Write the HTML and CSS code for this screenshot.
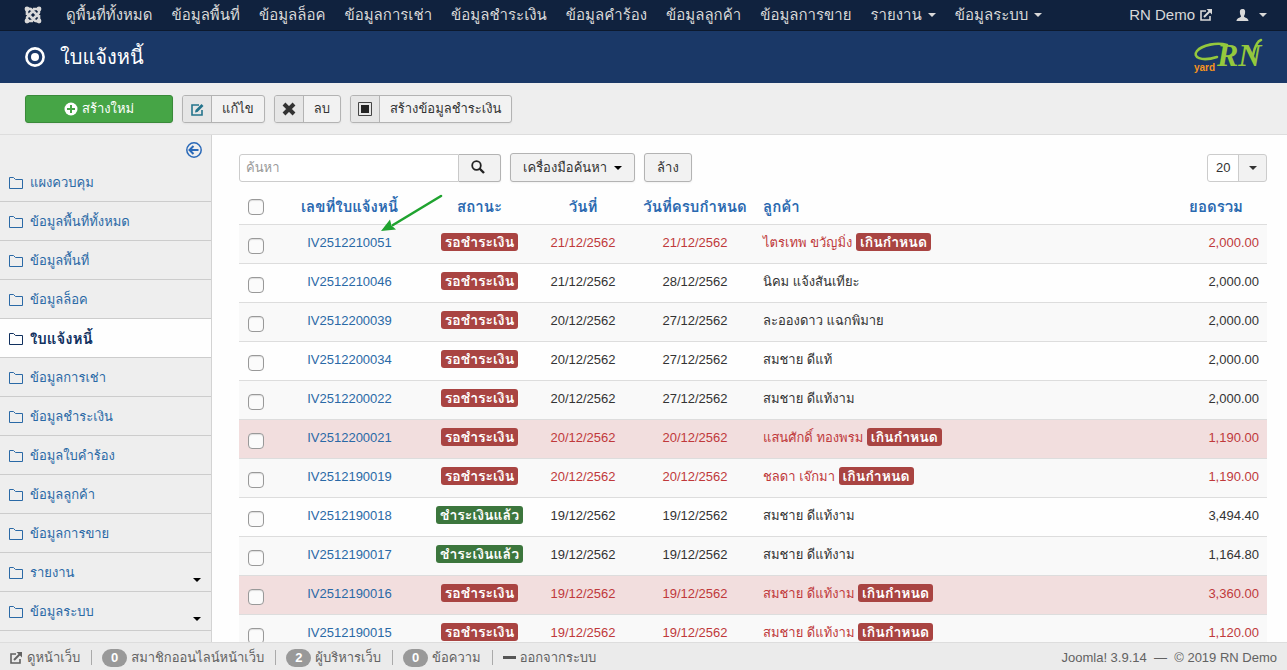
FILE: index.html
```html
<!DOCTYPE html>
<html lang="th">
<head>
<meta charset="utf-8">
<meta name="viewport" content="width=device-width, initial-scale=1">
<title>ใบแจ้งหนี้ - RN Demo</title>
<link rel="stylesheet" href="styles.css">
</head>
<body>
<svg class="defs" aria-hidden="true">
  <symbol id="folder" viewBox="0 0 14 12"><path d="M.5 .5V11.500H13.500V2.500H6.500L4.500.500Z" fill="none" stroke="currentColor"/></symbol>
  <symbol id="out" viewBox="0 0 12 12"><path d="M6 2H1V11H10V7" fill="none" stroke="currentColor" stroke-width="1.600"/><path d="M4 8L10 2" stroke="currentColor" stroke-width="2"/><path d="M6.500 0H12V5.500Z" fill="currentColor"/></symbol>
</svg>
<nav class="navbar">
  <a class="joomla" href="#" aria-label="Joomla"><svg width="18" height="18" viewBox="0 0 18 18"><g fill="none" stroke="currentColor" stroke-width="2.600"><path d="M3 9V5C3 3 6 2 8 4L14 10M9 3H13C15 3 16 6 14 8L8 14M15 9V13C15 15 12 16 10 14L4 8M9 15H5C3 15 2 12 4 10L10 4"/></g><g fill="currentColor"><circle cx="3" cy="3" r="2.400"/><circle cx="15" cy="3" r="2.400"/><circle cx="3" cy="15" r="2.400"/><circle cx="15" cy="15" r="2.400"/></g></svg></a>
  <a href="#">ดูพื้นที่ทั้งหมด</a>
  <a href="#">ข้อมูลพื้นที่</a>
  <a href="#">ข้อมูลล็อค</a>
  <a href="#">ข้อมูลการเช่า</a>
  <a href="#">ข้อมูลชำระเงิน</a>
  <a href="#">ข้อมูลคำร้อง</a>
  <a href="#">ข้อมูลลูกค้า</a>
  <a href="#">ข้อมูลการขาย</a>
  <a href="#">รายงาน<span class="caret"></span></a>
  <a href="#">ข้อมูลระบบ<span class="caret"></span></a>
  <a class="site" href="#">RN Demo <svg width="12" height="12"><use href="#out"/></svg></a>
  <a class="user" href="#" aria-label="ผู้ใช้"><svg width="13" height="12" viewBox="0 0 13 12"><path d="M6.500 0C9 0 9.500 2 9 4.500C8.800 6 8 6.500 8 7.500C8.500 8.800 12.500 9 12.500 12H.500C.500 9 4.500 8.800 5 7.500C5 6.500 4.200 6 4 4.500C3.500 2 4 0 6.500 0Z" fill="currentColor"/></svg><span class="caret"></span></a>
</nav>
<header class="header">
  <svg width="20" height="20" viewBox="0 0 20 20"><circle cx="10" cy="10" r="8.600" fill="none" stroke="#fff" stroke-width="2.600"/><circle cx="10" cy="10" r="4" fill="#fff"/></svg>
  <h1>ใบแจ้งหนี้</h1>
  <svg class="logo" width="70" height="40" viewBox="0 0 70 40" role="img" aria-label="RN yard"><g fill="none" stroke="#94c83d" stroke-width="2.600" stroke-linecap="round"><path d="M24 20C8 25-1 20 4 14C9 8 24 5 34 8"/><path d="M60 18C62 9 64 4 68 3"/></g><text class="logo-rn" x="24" y="29">RN</text><text class="logo-yard" x="1" y="34">yard</text></svg>
</header>
<div class="toolbar">
  <button class="btn new"><svg width="14" height="14" viewBox="0 0 14 14"><circle cx="7" cy="7" r="6.500" fill="#fff"/><path d="M7 3V11M3 7H11" stroke="#46a546" stroke-width="2"/></svg>สร้างใหม่</button>
  <button class="btn split"><span class="ico"><svg width="13" height="13" viewBox="0 0 13 13"><path d="M8 2H1V12H11V7" fill="none" stroke="#24748c" stroke-width="1.600"/><path d="M4 9.500L4.500 7L10.500 1L12.500 3L6.500 9Z" fill="#24748c"/></svg></span><span class="lbl">แก้ไข</span></button>
  <button class="btn split"><span class="ico"><svg width="14" height="14" viewBox="0 0 14 14"><path d="M2 2L12 12M12 2L2 12" stroke="#333" stroke-width="4"/></svg></span><span class="lbl">ลบ</span></button>
  <button class="btn split"><span class="ico"><svg width="14" height="14" viewBox="0 0 14 14"><path d="M.5 .5H13.500V13.500H.5Z" fill="none" stroke="#444"/><path d="M3 3H11V11H3Z" fill="#222"/></svg></span><span class="lbl">สร้างข้อมูลชำระเงิน</span></button>
</div>
<div class="layout">
  <aside class="sidebar">
    <button class="collapse" aria-label="ซ่อนแถบข้าง"><svg width="16" height="16" viewBox="0 0 16 16" fill="none" stroke="#2a69b8"><circle cx="8" cy="8" r="7.200" stroke-width="1.500"/><path d="M3.500 8H12.500M7.500 4L3.500 8L7.500 12" stroke-width="2"/></svg></button>
    <ul>
      <li><a href="#"><svg width="14" height="12"><use href="#folder"/></svg>แผงควบคุม</a></li>
      <li><a href="#"><svg width="14" height="12"><use href="#folder"/></svg>ข้อมูลพื้นที่ทั้งหมด</a></li>
      <li><a href="#"><svg width="14" height="12"><use href="#folder"/></svg>ข้อมูลพื้นที่</a></li>
      <li><a href="#"><svg width="14" height="12"><use href="#folder"/></svg>ข้อมูลล็อค</a></li>
      <li class="active"><a href="#"><svg width="14" height="12"><use href="#folder"/></svg>ใบแจ้งหนี้</a></li>
      <li><a href="#"><svg width="14" height="12"><use href="#folder"/></svg>ข้อมูลการเช่า</a></li>
      <li><a href="#"><svg width="14" height="12"><use href="#folder"/></svg>ข้อมูลชำระเงิน</a></li>
      <li><a href="#"><svg width="14" height="12"><use href="#folder"/></svg>ข้อมูลใบคำร้อง</a></li>
      <li><a href="#"><svg width="14" height="12"><use href="#folder"/></svg>ข้อมูลลูกค้า</a></li>
      <li><a href="#"><svg width="14" height="12"><use href="#folder"/></svg>ข้อมูลการขาย</a></li>
      <li><a href="#"><svg width="14" height="12"><use href="#folder"/></svg>รายงาน<span class="caret"></span></a></li>
      <li><a href="#"><svg width="14" height="12"><use href="#folder"/></svg>ข้อมูลระบบ<span class="caret"></span></a></li>
    </ul>
  </aside>
  <main class="content">
    <form class="filters">
      <div class="search"><input type="text" placeholder="ค้นหา" aria-label="ค้นหา"><button type="button" class="btn" aria-label="ค้นหา"><svg width="14" height="14" viewBox="0 0 14 14" fill="none" stroke="#222"><circle cx="5.500" cy="5.500" r="4.300" stroke-width="1.800"/><path d="M8.500 8.500L13 13" stroke-width="2.400"/></svg></button></div>
      <button type="button" class="btn tools">เครื่องมือค้นหา<span class="caret"></span></button>
      <button type="button" class="btn clear">ล้าง</button>
      <div class="limit"><select aria-label="จำนวนรายการ"><option>20</option></select><span class="caret"></span></div>
    </form>
    <table>
      <colgroup><col class="c-check"><col class="c-no"><col class="c-status"><col class="c-date"><col class="c-due"><col><col class="c-total"></colgroup>
      <thead><tr><th><input type="checkbox" aria-label="เลือกทั้งหมด"></th><th class="mid no">เลขที่ใบแจ้งหนี้<svg class="arrow" width="62" height="40" viewBox="0 0 62 40"><path d="M60 2L12 31" stroke="#1fa32f" stroke-width="2.600" stroke-linecap="round"/><path d="M0 37L9 25.500L10.500 31.500L15 35.500Z" fill="#1fa32f"/></svg></th><th class="mid">สถานะ</th><th class="mid">วันที่</th><th class="mid">วันที่ครบกำหนด</th><th>ลูกค้า</th><th class="sum">ยอดรวม</th></tr></thead>
      <tbody>
        <tr class="late"><td><input type="checkbox" aria-label="IV2512210051"></td><td class="mid"><a href="#">IV2512210051</a></td><td class="mid"><span class="label">รอชำระเงิน</span></td><td class="mid">21/12/2562</td><td class="mid">21/12/2562</td><td>ไตรเทพ ขวัญมิ่ง <span class="label">เกินกำหนด</span></td><td class="num">2,000.00</td></tr>
        <tr><td><input type="checkbox" aria-label="IV2512210046"></td><td class="mid"><a href="#">IV2512210046</a></td><td class="mid"><span class="label">รอชำระเงิน</span></td><td class="mid">21/12/2562</td><td class="mid">28/12/2562</td><td>นิคม แจ้งสันเทียะ</td><td class="num">2,000.00</td></tr>
        <tr><td><input type="checkbox" aria-label="IV2512200039"></td><td class="mid"><a href="#">IV2512200039</a></td><td class="mid"><span class="label">รอชำระเงิน</span></td><td class="mid">20/12/2562</td><td class="mid">27/12/2562</td><td>ละอองดาว แฉกพิมาย</td><td class="num">2,000.00</td></tr>
        <tr><td><input type="checkbox" aria-label="IV2512200034"></td><td class="mid"><a href="#">IV2512200034</a></td><td class="mid"><span class="label">รอชำระเงิน</span></td><td class="mid">20/12/2562</td><td class="mid">27/12/2562</td><td>สมชาย ดีแท้</td><td class="num">2,000.00</td></tr>
        <tr><td><input type="checkbox" aria-label="IV2512200022"></td><td class="mid"><a href="#">IV2512200022</a></td><td class="mid"><span class="label">รอชำระเงิน</span></td><td class="mid">20/12/2562</td><td class="mid">27/12/2562</td><td>สมชาย ดีแท้งาม</td><td class="num">2,000.00</td></tr>
        <tr class="late error"><td><input type="checkbox" aria-label="IV2512200021"></td><td class="mid"><a href="#">IV2512200021</a></td><td class="mid"><span class="label">รอชำระเงิน</span></td><td class="mid">20/12/2562</td><td class="mid">20/12/2562</td><td>แสนศักดิ์ ทองพรม <span class="label">เกินกำหนด</span></td><td class="num">1,190.00</td></tr>
        <tr class="late"><td><input type="checkbox" aria-label="IV2512190019"></td><td class="mid"><a href="#">IV2512190019</a></td><td class="mid"><span class="label">รอชำระเงิน</span></td><td class="mid">20/12/2562</td><td class="mid">20/12/2562</td><td>ชลดา เจ๊กมา <span class="label">เกินกำหนด</span></td><td class="num">1,190.00</td></tr>
        <tr><td><input type="checkbox" aria-label="IV2512190018"></td><td class="mid"><a href="#">IV2512190018</a></td><td class="mid"><span class="label paid">ชำระเงินแล้ว</span></td><td class="mid">19/12/2562</td><td class="mid">19/12/2562</td><td>สมชาย ดีแท้งาม</td><td class="num">3,494.40</td></tr>
        <tr><td><input type="checkbox" aria-label="IV2512190017"></td><td class="mid"><a href="#">IV2512190017</a></td><td class="mid"><span class="label paid">ชำระเงินแล้ว</span></td><td class="mid">19/12/2562</td><td class="mid">19/12/2562</td><td>สมชาย ดีแท้งาม</td><td class="num">1,164.80</td></tr>
        <tr class="late error"><td><input type="checkbox" aria-label="IV2512190016"></td><td class="mid"><a href="#">IV2512190016</a></td><td class="mid"><span class="label">รอชำระเงิน</span></td><td class="mid">19/12/2562</td><td class="mid">19/12/2562</td><td>สมชาย ดีแท้งาม <span class="label">เกินกำหนด</span></td><td class="num">3,360.00</td></tr>
        <tr class="late"><td><input type="checkbox" aria-label="IV2512190015"></td><td class="mid"><a href="#">IV2512190015</a></td><td class="mid"><span class="label">รอชำระเงิน</span></td><td class="mid">19/12/2562</td><td class="mid">19/12/2562</td><td>สมชาย ดีแท้งาม <span class="label">เกินกำหนด</span></td><td class="num">1,120.00</td></tr>
      </tbody>
    </table>
  </main>
</div>
<footer class="status">
  <a href="#"><svg width="12" height="12"><use href="#out"/></svg>ดูหน้าเว็บ</a>
  <span class="item"><span class="badge">0</span>สมาชิกออนไลน์หน้าเว็บ</span>
  <span class="item"><span class="badge">2</span>ผู้บริหารเว็บ</span>
  <span class="item"><span class="badge">0</span>ข้อความ</span>
  <a class="item" href="#"><span class="minus"></span>ออกจากระบบ</a>
  <span class="copy">Joomla! 3.9.14 &nbsp;—&nbsp; © 2019 RN Demo</span>
</footer>
</body>
</html>
```
FILE: styles.css
```css
* { box-sizing: border-box; }
body {
  margin: 0;
  height: 100vh;
  overflow: hidden;
  display: flex;
  flex-direction: column;
  background: #fefefe;
  color: #333;
  font: 13px/18px "Liberation Sans", Loma, "Noto Sans Thai", sans-serif;
}
a { color: #2a69a6; text-decoration: none; }
button, input, select { font: inherit; color: inherit; margin: 0; }
svg { flex: none; }
.defs { position: absolute; width: 0; height: 0; }
.caret {
  display: inline-block;
  border: 4px solid transparent;
  border-top-color: currentColor;
  border-bottom: 0;
}
.navbar {
  flex: none;
  display: flex;
  align-items: center;
  gap: 19px;
  height: 31px;
  padding: 0 20px 0 24px;
  background: #10223e;
  border-bottom: 1px solid #0c192e;
  font-size: 15px;
  line-height: 20px;
  white-space: nowrap;
}
.navbar a { color: #d9d9d9; display: flex; align-items: center; }
.navbar .caret { margin-left: 6px; }
.navbar .joomla { margin-right: 5px; }
.navbar .site { margin-left: auto; gap: 5px; }
.navbar .user { margin-left: 5px; }
.navbar .user .caret { margin-left: 10px; }
.header {
  flex: none;
  display: flex;
  align-items: center;
  height: 52px;
  padding: 0 24px 0 25px;
  background: #1a3867;
  color: #fff;
}
.header h1 { margin: 0 0 0 15px; font-size: 20px; line-height: 32px; font-weight: 400; }
.logo { margin-left: auto; }
.logo-rn { font: italic bold 32px "Liberation Serif", serif; fill: #94c83d; }
.logo-yard { font: bold 10px "Liberation Sans", sans-serif; fill: #f7941d; }
.toolbar {
  flex: none;
  display: flex;
  gap: 9px;
  padding: 12px 25px 11px;
  background: #eee;
  border-bottom: 1px solid #ddd;
}
.btn {
  display: flex;
  align-items: center;
  justify-content: center;
  height: 28px;
  padding: 0 12px;
  background: #f2f2f2;
  border: 1px solid #b3b3b3;
  border-radius: 3px;
  box-shadow: 0 1px 2px rgba(0, 0, 0, .05);
  white-space: nowrap;
}
.new { width: 148px; gap: 4px; background: #46a546; border-color: #3a8a3a; color: #fff; }
.split { padding: 0; align-items: stretch; overflow: hidden; }
.ico {
  display: flex;
  align-items: center;
  justify-content: center;
  width: 29px;
  background: #e6e6e6;
  border-right: 1px solid #b3b3b3;
}
.lbl { padding: 4px 10px; }
.layout { flex: 1; min-height: 0; display: flex; }
.sidebar {
  flex: none;
  width: 212px;
  background: #eee;
  border-right: 1px solid #d3d3d3;
}
.collapse { display: block; margin: 7px 9px 5px auto; padding: 0; border: 0; background: none; height: 16px; }
.collapse svg { display: block; }
.sidebar ul { margin: 0; padding: 0; list-style: none; }
.sidebar li { border-bottom: 1px solid #ccc; }
.sidebar a { display: flex; align-items: center; gap: 7px; height: 38px; padding: 1px 10px 0 9px; }
.sidebar .active { background: #fefefe; }
.sidebar .active a { color: #10305e; font-size: 15px; font-weight: 700; }
.sidebar .caret { margin: 15px 0 0 auto; color: #000; }
.content { flex: 1; min-width: 0; padding: 18px 20px 0 27px; }
.filters { display: flex; align-items: center; height: 29px; gap: 9px; }
.search { display: flex; }
.search input {
  width: 220px;
  height: 28px;
  padding: 4px 6px;
  border: 1px solid #ccc;
  border-radius: 3px 0 0 3px;
  background: #fff;
}
.search input::placeholder { color: #999; opacity: 1; }
.search .btn { width: 42px; padding: 0 16px 2px 12px; border-left: 0; border-radius: 0 3px 3px 0; }
.tools { height: 29px; gap: 7px; }
.tools .caret { color: #000; }
.clear { height: 29px; }
.limit { position: relative; margin-left: auto; }
.limit select {
  appearance: none;
  display: block;
  width: 60px;
  height: 28px;
  padding: 0 8px;
  border: 1px solid #ccc;
  border-radius: 3px;
  background: linear-gradient(to right, #fff 30px, #ccc 30px, #ccc 31px, #f2f2f2 31px);
}
.limit .caret { position: absolute; right: 10px; top: 12px; pointer-events: none; }
table { width: 100%; margin-top: 8px; table-layout: fixed; border-collapse: separate; border-spacing: 0; }
.c-check { width: 32px; }
.c-no { width: 157px; }
.c-status { width: 103px; }
.c-date { width: 104px; }
.c-due { width: 120px; }
.c-total { width: 120px; }
th { height: 34px; padding: 8px 8px 7px; text-align: left; vertical-align: top; color: #2a69b0; font-size: 15px; white-space: nowrap; }
td { height: 39px; padding: 9px 8px 8px; border-top: 1px solid #ddd; vertical-align: top; white-space: nowrap; }
.mid { text-align: center; padding-left: 0; padding-right: 0; }
.num { text-align: right; }
.sum { text-align: right; padding-right: 24px; }
tbody tr:nth-child(odd) td { background: #f9f9f9; }
tbody tr.error td { background: #f2dede; }
.late td { color: #c0393b; }
table input {
  appearance: none;
  display: block;
  width: 16px;
  height: 16px;
  margin: 4px 0 0 1px;
  border: 1px solid #999;
  border-radius: 4px;
  background: #fbfbfb;
  box-shadow: inset 0 1px 1px #ddd;
}
th input { margin-top: 1px; }
.no { position: relative; }
.arrow { position: absolute; left: 110px; top: 4px; }
.label {
  display: inline-block;
  height: 18px;
  margin-top: -1px;
  padding: 0 4px;
  border-radius: 3px;
  background: #a94442;
  color: #fff;
  font-size: 14px;
  font-weight: 700;
  vertical-align: top;
}
.paid { background: #3c763d; }
.status {
  flex: none;
  display: flex;
  align-items: center;
  height: 28px;
  padding: 2px 10px 0;
  background: #ebebeb;
  border-top: 1px solid #ddd;
  color: #626262;
  white-space: nowrap;
}
.status a { color: inherit; display: flex; align-items: center; gap: 5px; }
.status .item {
  display: flex;
  align-items: center;
  gap: 4px;
  margin-left: 11px;
  padding-left: 10px;
  border-left: 1px solid #aaa;
  height: 15px;
}
.badge {
  width: 25px;
  border-radius: 9px;
  background: #999;
  color: #fff;
  font-weight: 700;
  text-align: center;
}
.minus { width: 13px; height: 3px; background: #555; }
.copy { margin-left: auto; }
```
